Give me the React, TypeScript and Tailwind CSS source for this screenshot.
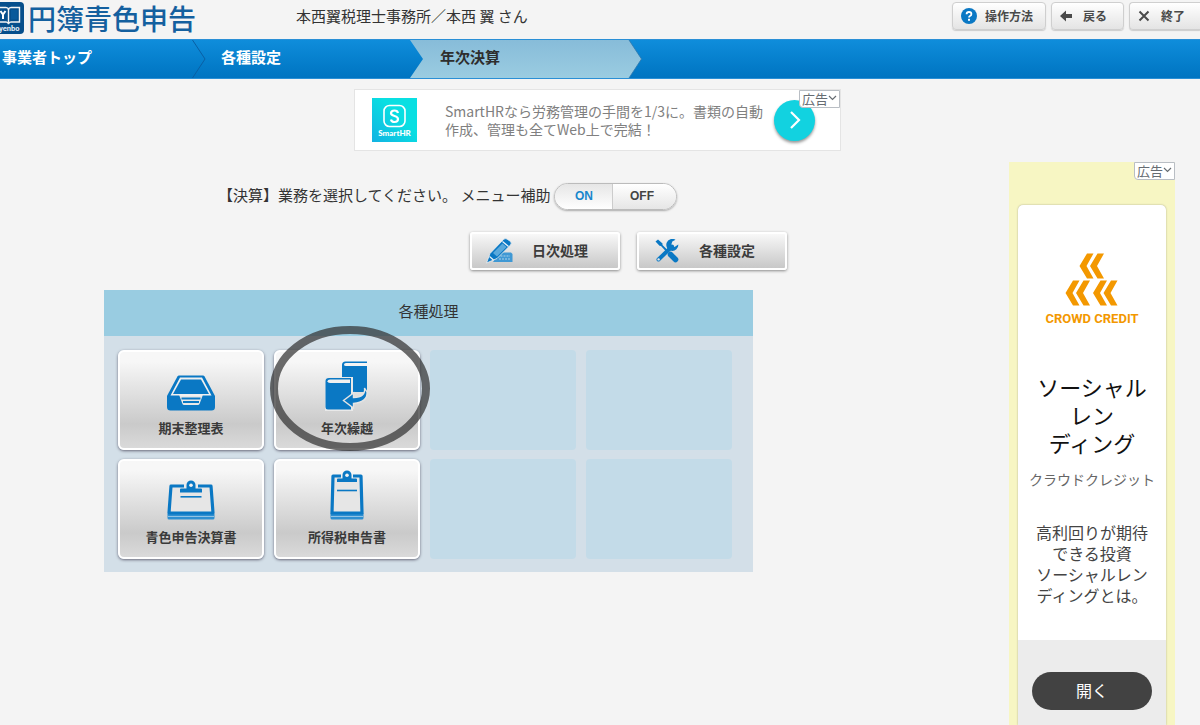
import type { ReactNode } from 'react';

const BLUE = '#0a78c4';

const Logo = () => (
  <svg className="h-[32px] w-[24px] shrink-0" viewBox="8 0 24 32" aria-hidden="true">
    <rect x="0" y="0" width="32" height="32" rx="4" fill="#064f8c" />
    <path d="M0 5.500 H14 Q16 5.500 16.500 7.500 Q17 5.500 19 5.500 H27.500 V20 H19 Q17 20 16.500 22 Q16 20 14 20 H0 Z" fill="none" stroke="#f4f4f4" strokeWidth="1.400" />
    <path d="M16.500 7 V21" stroke="#f4f4f4" strokeWidth="1.400" />
    <path d="M19 8 H25.500 V17.500 H19 Z" fill="#0a5a9b" />
    <path d="M8.500 9 L11 12.500 L13.500 9 M11 12 V17" fill="none" stroke="#fff" strokeWidth="2" />
    <text x="7" y="28.500" fontSize="7.500" fontWeight="700" fontFamily="Roboto, sans-serif" fill="#e6eef5">yenbo</text>
  </svg>
);

const HelpIcon = () => (
  <svg className="size-[16px]" viewBox="0 0 16 16" aria-hidden="true">
    <circle cx="8" cy="8" r="8" fill={BLUE} />
    <path d="M5.600 6.300 Q5.600 4 8 4 Q10.400 4 10.400 6 Q10.400 7.300 9 8 Q8 8.500 8 9.600" fill="none" stroke="#fff" strokeWidth="1.800" />
    <rect x="7" y="10.800" width="2" height="2" fill="#fff" />
  </svg>
);

const BackIcon = () => (
  <svg className="h-[12px] w-[12px]" viewBox="0 0 12 12" aria-hidden="true">
    <path d="M0 6 L6 0.500 V4 H12 V8 H6 V11.500 Z" fill="#4a4a4a" />
  </svg>
);

const CloseIcon = () => (
  <svg className="h-[12px] w-[12px]" viewBox="0 0 12 12" aria-hidden="true">
    <path d="M1.500 1.500 L10.500 10.500 M10.500 1.500 L1.500 10.500" stroke="#4a4a4a" strokeWidth="2" />
  </svg>
);

const PencilIcon = () => (
  <svg className="h-[26px] w-[28px]" viewBox="0 0 28 26" aria-hidden="true">
    <path d="M13 14.500 H25 L26.500 16 V24 H7 Z" fill="#3f98d4" />
    <path d="M14.500 18 H24 M13 21 H24" stroke="#a9cfe8" strokeWidth="1.200" strokeDasharray="2 1" />
    <path d="M0.500 25 L4 15.500 L17.500 1.500 Q19 0 21 1 L24.500 3.500 Q26 5 24.500 7 L11 20.500 Z" fill={BLUE} stroke="#f0f0f0" strokeWidth="0.800" />
    <path d="M7 15 L16.500 5.500 L20.500 9 L11 18.500 Z" fill="#5aa9dc" />
    <path d="M16.500 3.500 L22.500 8.500" stroke="#eef5fa" strokeWidth="1.200" />
    <path d="M3.500 18.500 L7.500 22" stroke="#eef5fa" strokeWidth="1.200" />
  </svg>
);

const ToolsIcon = () => (
  <svg className="h-[24px] w-[24px]" viewBox="0 0 24 24" aria-hidden="true">
    <path d="M3.500 20.500 L17 7.500" stroke={BLUE} strokeWidth="4" strokeLinecap="round" />
    <path d="M20.500 0.800 A6 6 0 1 0 23.300 5.500 L19.500 8 L16.300 5.500 L17.300 2.500 Z" fill={BLUE} />
    <circle cx="3.600" cy="20.400" r="1.200" fill="#e6e6e6" />
    <path d="M0.500 2.500 L3 0.500 L7.500 4.500 L7.500 6 L14 12.500 L12.500 14 L6 7 L4.500 6.800 Z" fill={BLUE} />
    <path d="M15.500 15.500 L20.500 20.500" stroke={BLUE} strokeWidth="5.500" strokeLinecap="round" />
  </svg>
);

const TrayIcon = () => (
  <svg className="h-[36px] w-[48px]" viewBox="0 0 48 36" aria-hidden="true">
    <path d="M12 0.500 H36 Q37 0.500 37.600 1.500 L48 21 V32 Q48 35.500 44.500 35.500 H3.500 Q0 35.500 0 32 V21 L10.400 1.500 Q11 0.500 12 0.500 Z" fill={BLUE} />
    <path d="M13 2.500 H35 L44.500 20.500 H36 L34.500 21.500 H13.500 L12 20.500 H3.500 Z" fill="#f0f0f0" />
    <path d="M14 4.500 H34 L42 19 H6 Z" fill={BLUE} />
    <path d="M12.500 21 H35.500 L32.500 29 Q32 30 31 30 H17 Q16 30 15.500 29 Z" fill="#e8e8e8" />
    <path d="M14.500 23.500 H33.500 M16 27 H32" stroke={BLUE} strokeWidth="1.800" />
  </svg>
);

const BooksIcon = () => (
  <svg className="h-[50px] w-[44px]" viewBox="0 0 44 50" aria-hidden="true">
    <path d="M17 4 Q17 0.500 20.500 0.500 H42 V31 H17 Z" fill={BLUE} />
    <path d="M42 2 H21 Q19 2 19 3.500 Q19 5 21 5 H42" fill="#f4f4f4" />
    <path d="M-1 16 H28 V50 H-1 Z" fill="#e9e9e9" />
    <path d="M0.500 20 Q0.500 17 4 17 H26 V48.500 H3 Q0.500 48.500 0.500 46 Z" fill={BLUE} />
    <path d="M25 18.500 H5 Q2.500 18.500 2.500 20.200 Q2.500 22 5 22 H25 Z" fill="#f0f0f0" />
    <path d="M39.500 27 Q41 36 28.500 36.500 V32 L18.500 39.500 L28.500 47 V42.500 Q43 41 42 31 Z" fill={BLUE} stroke="#e4e4e4" strokeWidth="1.400" />
  </svg>
);

const WideClipboardIcon = () => (
  <svg className="h-[40px] w-[48px]" viewBox="0 0 48 40" aria-hidden="true">
    <path d="M0.500 34 V38 Q0.500 39.500 2 39.500 H46 Q47.500 39.500 47.500 38 V34 Z" fill="#2f8fd0" />
    <path d="M1 36.500 H47" stroke="#a9cfe8" strokeWidth="0.800" />
    <path d="M4 6 H44 L46 33 H2 Z" fill="#e6e6e6" stroke={BLUE} strokeWidth="3.200" strokeLinejoin="round" />
    <path d="M17 4 H31 V8 H17 Z" fill="#eaeaea" />
    <path d="M13 12.500 V9.500 Q13 8.500 14 8.500 H19.500 V5 A4.500 4.500 0 0 1 28.500 5 V8.500 H34 Q35 8.500 35 9.500 V12.500 Z" fill={BLUE} />
    <circle cx="24" cy="5.200" r="1.800" fill="#f2f2f2" />
    <path d="M13.500 16.800 H34.500" stroke={BLUE} strokeWidth="1.600" />
  </svg>
);

const TallClipboardIcon = () => (
  <svg className="h-[50px] w-[34px]" viewBox="0 0 34 50" aria-hidden="true">
    <path d="M0.500 43 V48 Q0.500 49.500 2 49.500 H32 Q33.500 49.500 33.500 48 V43 Z" fill="#2f8fd0" />
    <path d="M1 46.500 H33" stroke="#a9cfe8" strokeWidth="0.800" />
    <path d="M3 6 H31 L32 43 H2 Z" fill="#e6e6e6" stroke={BLUE} strokeWidth="3.200" strokeLinejoin="round" />
    <path d="M11 4 H23 V8 H11 Z" fill="#f0f0f0" />
    <path d="M7 12 V9.500 Q7 8.500 8 8.500 H12.500 V5 A4.500 4.500 0 0 1 21.500 5 V8.500 H26 Q27 8.500 27 9.500 V12 Z" fill={BLUE} />
    <circle cx="17" cy="5.200" r="1.800" fill="#f2f2f2" />
    <path d="M7 20.500 H27" stroke={BLUE} strokeWidth="1.600" />
  </svg>
);

const SmartHRLogo = () => (
  <svg className="h-[44px] w-[45px] shrink-0" viewBox="0 0 45 44" role="img" aria-label="SmartHR">
    <defs>
      <linearGradient id="hr" x1="1" y1="0" x2="0" y2="1">
        <stop offset="0.4" stopColor="#09dfe2" />
        <stop offset="1" stopColor="#12b2e2" />
      </linearGradient>
    </defs>
    <rect width="45" height="44" fill="url(#hr)" />
    <rect x="12" y="7.500" width="21" height="21" rx="5.500" fill="none" stroke="#fff" strokeWidth="1.600" />
    <path d="M26 15 Q25.500 12.500 22.500 12.500 Q19 12.500 19 15.300 Q19 17 22.500 18 Q26 19 26 21 Q26 24 22.500 24 Q19.500 24 19 21.500" fill="none" stroke="#fff" strokeWidth="2.200" />
    <text x="22.500" y="37.500" fontSize="8" fontWeight="900" textAnchor="middle" fontFamily="Lato, sans-serif" fill="#fff">SmartHR</text>
  </svg>
);

const CrowdCreditMark = () => (
  <svg className="h-[54px] w-[54px]" viewBox="0 0 54 54" aria-hidden="true">
    <g fill="#f39800">
      <path d="M22 0.500 H28.500 L21.500 13 L28.500 25.500 H22 L14.500 13 Z" />
      <path d="M32.500 0.500 H39 L32 13 L39 25.500 H32.500 L25 13 Z" />
      <path d="M8 27.500 H14.500 L7.500 40 L14.500 52.500 H8 L0.500 40 Z" />
      <path d="M18.500 27.500 H25 L18 40 L25 52.500 H18.500 L11 40 Z" />
      <path d="M35.500 27.500 H42 L35 40 L42 52.500 H35.500 L28 40 Z" />
      <path d="M46 27.500 H52.500 L45.500 40 L52.500 52.500 H46 L38.500 40 Z" />
    </g>
  </svg>
);

const AdLabel = () => (
  <button
    type="button"
    className="absolute top-0 right-0 flex h-[18px] w-[41px] items-center justify-center rounded-bl-sm border border-[#b9bec4] bg-white pb-[2px] text-[13px] leading-none text-[#666c72]"
  >
    広告
    <svg className="h-[6px] w-[9px]" viewBox="0 0 9 6" aria-hidden="true">
      <path d="M1 1 L4.500 4.500 L8 1" fill="none" stroke="#666c72" strokeWidth="1.200" />
    </svg>
  </button>
);

const HeaderButton = ({ icon, label, className }: { icon: ReactNode; label: string; className: string }) => (
  <button
    type="button"
    className={`flex h-[28px] items-center border border-[#cfcfcf] bg-linear-to-b from-white to-[#e4e4e4] pl-[8px] text-[12px] leading-[18px] font-bold text-[#4a4a4a] shadow-[0_1px_1px_#ccc] ${className}`}
  >
    {icon}
    <span className="pb-[1px]">{label}</span>
  </button>
);

const WideButton = ({ icon, label }: { icon: ReactNode; label: string }) => (
  <button
    type="button"
    className="flex h-[38px] w-[150px] items-center rounded-[3px] border-2 border-white bg-linear-to-b from-[#f8f8f8] to-[#c8c8c8] pl-[14px] text-[14px] font-bold text-[#3c3c3c] shadow-[0_1px_3px_#888]"
  >
    <span className="mr-[18px] flex w-[28px] justify-center">{icon}</span>
    <span className="pb-[2px]">{label}</span>
  </button>
);

const tiles = [
  { label: '期末整理表', icon: <TrayIcon />, marked: false },
  { label: '年次繰越', icon: <BooksIcon />, marked: true },
  null,
  null,
  { label: '青色申告決算書', icon: <WideClipboardIcon />, marked: false },
  { label: '所得税申告書', icon: <TallClipboardIcon />, marked: false },
  null,
  null,
];

const Header = () => (
  <header className="flex h-[39px] items-start justify-between">
    <div className="flex items-start">
      <div className="flex items-center gap-[4px] pt-[2px]">
        <Logo />
        <h1 className="text-[28px] leading-[32px] font-medium text-[#14609f]">円簿青色申告</h1>
      </div>
      <p className="ml-[100px] pt-[5px] text-[15px] leading-[22px]">本西翼税理士事務所／本西 翼 さん</p>
    </div>
    <div className="flex gap-[5px] pt-[2px]">
      <HeaderButton icon={<HelpIcon />} label="操作方法" className="w-[94px] gap-[8px] rounded-[4px]" />
      <HeaderButton icon={<BackIcon />} label="戻る" className="w-[73px] gap-[11px] rounded-[4px]" />
      <HeaderButton icon={<CloseIcon />} label="終了" className="w-[71px] gap-[11px] rounded-l-[4px] border-r-0" />
    </div>
  </header>
);

const Nav = () => (
  <nav className="flex h-[40px] border-y border-[#2a8fd6] bg-linear-to-b from-[#0f8ddb] to-[#0074c1] text-[15px] font-bold text-white">
    <a href="#top" className="flex w-[192px] items-center pb-[4px] pl-[2px]">
      事業者トップ
    </a>
    <svg className="h-[38px] w-[14px]" viewBox="0 0 14 38" aria-hidden="true">
      <path d="M0.500 0 L13 19 L0.500 38" fill="none" stroke="#0a5fa3" />
    </svg>
    <a href="#settings" className="flex w-[204px] items-center pb-[4px] pl-[15px]">
      各種設定
    </a>
    <svg className="h-[38px] w-[14px]" viewBox="0 0 14 38" aria-hidden="true">
      <defs>
        <linearGradient id="step" x1="0" y1="0" x2="0" y2="1">
          <stop offset="0" stopColor="#87bcd9" />
          <stop offset="1" stopColor="#9acce1" />
        </linearGradient>
      </defs>
      <path d="M0 0 H14 V38 H0 L13 19 Z" fill="url(#step)" />
    </svg>
    <a
      href="#closing"
      aria-current="page"
      className="flex w-[204px] items-center bg-linear-to-b from-[#87bcd9] to-[#9acce1] pb-[4px] pl-[16px] text-[#2e2e2e]"
    >
      年次決算
    </a>
    <svg className="h-[38px] w-[14px]" viewBox="0 0 14 38" aria-hidden="true">
      <path d="M0 0 H1 L13.500 19 L1 38 H0 Z" fill="url(#step)" />
      <path d="M1 0 L13.500 19 L1 38" fill="none" stroke="#2d77ad" strokeWidth="0.800" />
    </svg>
  </nav>
);

const Banner = () => (
  <div className="flex justify-center pt-[10px] pr-[5px]">
    <div className="relative flex h-[62px] w-[487px] items-center border border-[#e4e4e4] bg-white pl-[17px]">
      <SmartHRLogo />
      <p className="ml-[28px] w-[316px] text-[14px] leading-[18px] whitespace-nowrap text-[#808080]">
        SmartHRなら労務管理の手間を1/3に。書類の自動
        <br />
        作成、管理も全てWeb上で完結！
      </p>
      <button
        type="button"
        aria-label="詳細"
        className="ml-[13px] flex size-[41px] shrink-0 items-center justify-center rounded-full bg-[#12d2e0] shadow-[0_2px_3px_#999]"
      >
        <svg className="h-[20px] w-[12px]" viewBox="0 0 12 20" aria-hidden="true">
          <path d="M2 2 L10 10 L2 18" fill="none" stroke="#fff" strokeWidth="2.200" />
        </svg>
      </button>
      <AdLabel />
    </div>
  </div>
);

const SideAd = () => (
  <aside className="relative mr-[25px] flex w-[166px] shrink-0 flex-col bg-[#f7f6c3] px-[9px] pt-[43px]">
    <div className="flex flex-1 flex-col rounded-t-[5px] bg-white text-center shadow-[0_0_2px_#a8a88a]">
      <div className="flex h-[435px] flex-col items-center pt-[48px]">
        <CrowdCreditMark />
        <p className="mt-[4px] font-[Roboto,sans-serif] text-[13px] leading-[16px] font-bold whitespace-nowrap text-[#f39800]">CROWD CREDIT</p>
        <p className="mt-[45px] text-[22px] leading-[28px] text-[#111]">
          ソーシャル
          <br />
          レン
          <br />
          ディング
        </p>
        <p className="mt-[12px] text-[14px] leading-[22px] text-[#666]">クラウドクレジット</p>
        <p className="mt-[32px] text-[16px] leading-[21px] text-[#444]">
          高利回りが期待
          <br />
          できる投資
          <br />
          ソーシャルレン
          <br />
          ディングとは。
        </p>
      </div>
      <div className="flex-1 bg-[#ececec] px-[14px] pt-[32px] pb-[15px]">
        <button type="button" className="h-[38px] w-full rounded-full bg-[#424242] pb-[2px] text-[16px] text-white">
          開く
        </button>
      </div>
    </div>
    <AdLabel />
  </aside>
);

const Panel = () => (
  <section className="mt-[20px] w-[649px] bg-[#d3dfe8]">
    <h2 className="flex h-[46px] items-center justify-center bg-[#99cce1] pb-[4px] text-[15px]">各種処理</h2>
    <div className="grid grid-cols-4 gap-x-[10px] gap-y-[9px] pt-[14px] pr-[21px] pb-[13px] pl-[14px]">
      {tiles.map((tile, index) =>
        tile ? (
          <div key={index} className="relative">
            <button
              type="button"
              className="flex h-[100px] w-full flex-col items-center justify-end rounded-[6px] border-2 border-white bg-linear-to-b from-[#f7f7f7] from-10% via-[#cacaca] via-75% to-[#dadada] pb-[10px] text-[13px] leading-[20px] font-bold text-[#3a3a3a] shadow-[0_1px_3px_#667]"
            >
              {tile.icon}
              <span className="mt-[7px]">{tile.label}</span>
            </button>
            {tile.marked && (
              <svg className="pointer-events-none absolute -top-[24px] -left-[4px] z-10 h-[125px] w-[160px]" viewBox="0 0 160 125" aria-hidden="true">
                <ellipse cx="80" cy="62.500" rx="76" ry="58.500" fill="none" stroke="#333" strokeOpacity="0.72" strokeWidth="8" />
              </svg>
            )}
          </div>
        ) : (
          <div key={index} className="h-[100px] rounded-[4px] bg-[#c3dbe8]" />
        )
      )}
    </div>
  </section>
);

const App = () => {
  return (
    <div className="flex min-h-screen flex-col bg-[#f4f4f4] font-['Noto_Sans_CJK_JP',sans-serif] text-[#333]">
      <Header />
      <Nav />
      <Banner />
      <div className="mt-[11px] flex flex-1 justify-between">
        <main className="pt-[20px] pl-[104px]">
          <div className="flex h-[28px] items-center gap-[4px] pl-[114px]">
            <p className="pb-[2px] text-[15px] leading-[22px] whitespace-nowrap">【決算】業務を選択してください。 メニュー補助</p>
            <div className="flex h-[27px] w-[123px] overflow-hidden rounded-full border border-[#bbb] font-['Liberation_Sans',sans-serif] text-[12px] font-bold shadow-[0_1px_2px_#aaa]">
              <button type="button" aria-pressed="true" className="flex-1 border-r border-[#ccc] bg-linear-to-b from-[#e6e6e6] to-white text-[#1a86cc]">
                ON
              </button>
              <button type="button" aria-pressed="false" className="flex-1 bg-linear-to-b from-white to-[#e6e6e6] pr-[6px] text-[#444]">
                OFF
              </button>
            </div>
          </div>
          <div className="mt-[22px] flex w-[683px] justify-end gap-[17px]">
            <WideButton icon={<PencilIcon />} label="日次処理" />
            <WideButton icon={<ToolsIcon />} label="各種設定" />
          </div>
          <Panel />
        </main>
        <SideAd />
      </div>
    </div>
  );
};

export default App;
